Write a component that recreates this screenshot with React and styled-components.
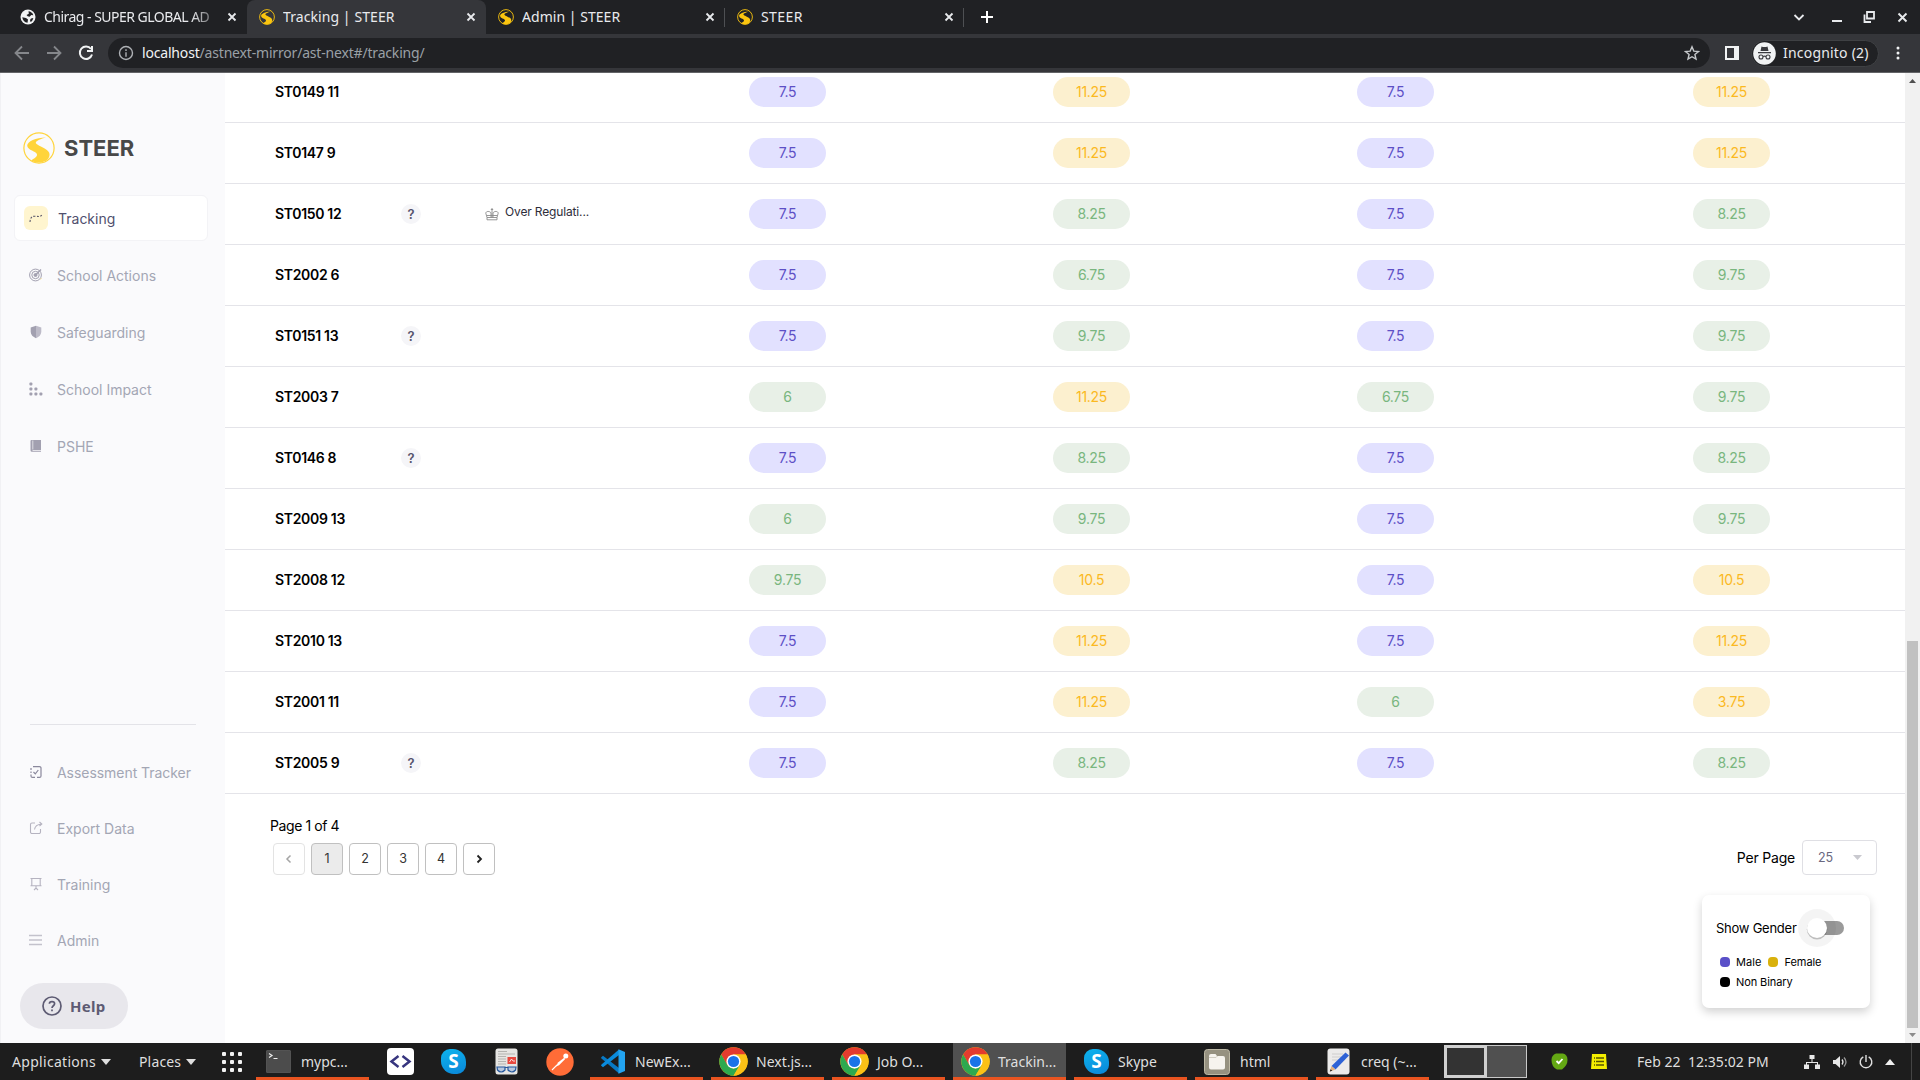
import React from "react";
import styled, { createGlobalStyle, css } from "styled-components";

const GlobalStyle = createGlobalStyle`
  * { box-sizing: border-box; }
  body { margin: 0; background: #fff; overflow: hidden; }
  svg { display: block; flex: none; }
`;

const uiFont = `"Noto Sans", "Open Sans", sans-serif`;
const appFont = `Inter, "Liberation Sans", sans-serif`;

const Screen = styled.div`
  width: 1920px;
  height: 1080px;
  display: flex;
  flex-direction: column;
  overflow: hidden;
  font-family: ${appFont};
`;

/* ---------- Browser chrome ---------- */

const TabStrip = styled.div`
  height: 34px;
  flex: none;
  display: flex;
  align-items: center;
  padding-left: 8px;
  background: #202124;
`;

const Tab = styled.div`
  position: relative;
  width: 239px;
  height: 34px;
  display: flex;
  align-items: center;
  gap: 8px;
  padding: 0 10px 0 12px;
  border-radius: 8px 8px 0 0;
  background: ${(p) => (p.$active ? "#35363a" : "transparent")};
  ${(p) =>
    p.$divider &&
    css`
      &::after {
        content: "";
        position: absolute;
        right: 0;
        top: 8px;
        width: 1px;
        height: 19px;
        background: #4e5053;
      }
    `}
`;

const TabTitle = styled.div`
  flex: 1;
  min-width: 0;
  overflow: hidden;
  white-space: nowrap;
  font: 400 14px/20px ${uiFont};
  letter-spacing: ${(p) => p.$ls || 0}px;
  color: #e9eaed;
  ${(p) =>
    p.$fade &&
    css`
      mask-image: linear-gradient(90deg, #000 84%, transparent 103%);
    `}
`;

const NewTab = styled.div`
  margin-left: 16px;
`;

const WindowControls = styled.div`
  margin-left: auto;
  display: flex;
  align-items: center;
  padding-right: 12px;
`;

const ControlSlot = styled.div`
  width: 12px;
  margin-left: ${(p) => p.$gap || 0}px;
  display: flex;
  justify-content: center;
`;

const Toolbar = styled.div`
  height: 39px;
  flex: none;
  display: flex;
  align-items: center;
  background: #35363a;
  border-bottom: 1px solid #636467;
  padding: 0 13px;
`;

const NavButtons = styled.div`
  display: flex;
  gap: 14px;
  width: 95px;
`;

const AddressBar = styled.div`
  width: 1602px;
  height: 30px;
  display: flex;
  align-items: center;
  padding: 0 10px;
  gap: 8px;
  border-radius: 15px;
  background: #202124;
`;

const Url = styled.div`
  flex: 1;
  font: 400 14px/20px ${uiFont};
  letter-spacing: -0.18px;
  color: #9aa0a6;
  b {
    font-weight: 400;
    color: #f1f3f4;
  }
`;

const PanelIcon = styled.div`
  margin-left: 15px;
`;

const Incognito = styled.div`
  margin-left: 12px;
  width: 128px;
  height: 27px;
  display: flex;
  align-items: center;
  gap: 7px;
  padding-left: 1px;
  border-radius: 14px;
  border: 1px solid #3f4144;
  background: #202124;
  color: #e8eaed;
  white-space: nowrap;
  font: 400 14px/20px ${uiFont};
  letter-spacing: 0.2px;
`;

const MenuDots = styled.div`
  margin-left: 17px;
`;

/* ---------- Page body ---------- */

const Page = styled.div`
  height: 970px;
  flex: none;
  display: flex;
  background: #fff;
`;

const Sidebar = styled.aside`
  width: 225px;
  flex: none;
  display: flex;
  flex-direction: column;
  background: #fafafc;
  border-left: 1px solid #f1f1f4;
`;

const Brand = styled.div`
  display: flex;
  align-items: center;
  gap: 9px;
  padding: 60px 0 0 22px;
  height: 90px;
  color: #484848;
  font-size: 22px;
  font-weight: 700;
  letter-spacing: 0;
`;

const Nav = styled.nav`
  display: flex;
  flex-direction: column;
  padding: 0 17px 0 13px;
  margin-top: ${(p) => p.$top}px;
  gap: ${(p) => p.$gap}px;
`;

const NavItem = styled.div`
  height: 46px;
  display: flex;
  align-items: center;
  padding-left: ${(p) => (p.$active ? 9 : 13)}px;
  border-radius: 6px;
  border: 1px solid ${(p) => (p.$active ? "#f3f3f6" : "transparent")};
  background: ${(p) => (p.$active ? "#fff" : "transparent")};
  color: ${(p) => (p.$active ? "#50506e" : "#a3a6b4")};
  font-size: 14px;
  letter-spacing: ${(p) => p.$ls || 0}px;
  white-space: nowrap;
`;

const NavIcon = styled.div`
  width: ${(p) => (p.$active ? 24 : 15)}px;
  height: ${(p) => (p.$active ? 24 : 15)}px;
  margin-right: ${(p) => (p.$active ? 10 : 14)}px;
  display: flex;
  align-items: center;
  justify-content: center;
  border-radius: 6px;
  background: ${(p) => (p.$active ? "#fff5cf" : "transparent")};
`;

const SideRule = styled.div`
  height: 1px;
  margin: 255px 29px 0 29px;
  background: #e3e3e8;
`;

const HelpButton = styled.div`
  margin: 20px 0 0 19px;
  width: 108px;
  height: 46px;
  display: flex;
  align-items: center;
  gap: 8px;
  padding-left: 22px;
  border-radius: 23px;
  background: #e8e7ec;
  color: #5d5b73;
  font: 700 15px/20px ${uiFont};
  letter-spacing: 0.3px;
`;

const Content = styled.main`
  width: 1680px;
  flex: none;
  overflow: hidden;
`;

const Table = styled.div`
  margin-top: -11px;
`;

const Row = styled.div`
  height: 61px;
  display: grid;
  grid-template-columns: 126px 84px 264px 304px 304px 336px 1fr;
  align-items: center;
  padding-left: 50px;
  border-bottom: 1px solid #e4e4e9;
`;

const StudentId = styled.div`
  padding-bottom: 1px;
  color: #000;
  font-size: 14px;
  font-weight: 600;
  letter-spacing: -0.32px;
`;

const QuestionBadge = styled.div`
  width: 20px;
  height: 20px;
  border-radius: 50%;
  background: #f5f5f8;
  color: #56546d;
  font-size: 13px;
  font-weight: 600;
  line-height: 21px;
  text-align: center;
`;

const Flag = styled.div`
  display: flex;
  align-items: center;
  gap: 6px;
  color: #2d2d3a;
  font-size: 12px;
  letter-spacing: -0.15px;
  span {
    padding-bottom: 5px;
  }
`;

const tones = {
  violet: ["#e2e1ff", "#5d50c6"],
  amber: ["#fcf0cf", "#fbb91f"],
  green: ["#e8f0e7", "#79b67e"],
};

const Score = styled.div`
  width: 77px;
  height: 30px;
  border-radius: 15px;
  background: ${(p) => tones[p.$tone][0]};
  color: ${(p) => tones[p.$tone][1]};
  font-size: 14px;
  line-height: 30px;
  text-align: center;
  letter-spacing: -0.3px;
`;

const Footer = styled.div`
  display: flex;
  justify-content: space-between;
  padding: 22px 28px 0 45px;
`;

const PageCount = styled.div`
  height: 20px;
  line-height: 20px;
  font-size: 14px;
  letter-spacing: -0.42px;
  color: #000;
`;

const PageButtons = styled.div`
  display: flex;
  gap: 6px;
  margin: 7px 0 0 3px;
`;

const PageButton = styled.div`
  width: 32px;
  height: 32px;
  display: flex;
  align-items: center;
  justify-content: center;
  padding-bottom: 1px;
  border-radius: 4px;
  border: 1px solid ${(p) => (p.$disabled ? "#e3e3e3" : "#c0c0c0")};
  background: ${(p) => (p.$selected ? "#ebebeb" : "#fff")};
  color: ${(p) => (p.$disabled ? "#a5a5a5" : "#333")};
  font-size: 12.5px;
`;

const PerPage = styled.div`
  display: flex;
  align-items: center;
  gap: 7px;
  height: 35px;
  margin-top: 24px;
  color: #000;
  font-size: 14px;
  letter-spacing: -0.2px;
`;

const Select = styled.div`
  width: 75px;
  height: 35px;
  display: flex;
  align-items: center;
  justify-content: space-between;
  padding: 0 14px 0 15px;
  border: 1px solid #dfdfe4;
  border-radius: 4px;
  color: #6a6880;
  font-size: 12.5px;
`;

const GenderCard = styled.div`
  width: 168px;
  height: 113px;
  margin: 20px 35px 0 auto;
  padding: 14px 14px 0;
  border-radius: 7px;
  background: #fff;
  box-shadow: 0 4px 10px rgba(0, 0, 0, 0.18);
  color: #000;
`;

const ToggleRow = styled.div`
  display: flex;
  align-items: center;
  height: 38px;
  font-size: 13px;
  letter-spacing: -0.25px;
  white-space: nowrap;
`;

const ToggleLabel = styled.span`
  width: 82px;
  padding-bottom: 1px;
`;

const Legend = styled.div`
  display: flex;
  flex-wrap: wrap;
  padding-left: 4px;
  margin-top: 5px;
`;

const LegendItem = styled.div`
  display: flex;
  align-items: center;
  height: 20px;
  margin-right: 6px;
  font-size: 11px;
  letter-spacing: ${(p) => p.$ls}px;
  &::before {
    content: "";
    width: 10px;
    height: 10px;
    margin-right: ${(p) => p.$gap}px;
    border-radius: 4px;
    background: ${(p) => p.$color};
  }
`;

const Scrollbar = styled.div`
  width: 15px;
  display: flex;
  flex-direction: column;
  align-items: center;
  justify-content: space-between;
  padding: 6px 0;
  background: #f1f1f1;
`;

const Thumb = styled.div`
  width: 11px;
  height: 387px;
  margin: auto 0 5px;
  background: #c1c1c1;
`;

/* ---------- Desktop panel ---------- */

const Panel = styled.div`
  height: 37px;
  flex: none;
  display: flex;
  background: #1d1d1d;
  color: #dfdfdf;
  font: 400 14px/37px ${uiFont};
  white-space: nowrap;
`;

const Menu = styled.div`
  width: ${(p) => p.$w}px;
  display: flex;
  align-items: center;
  gap: 5px;
  padding-left: ${(p) => p.$pad}px;
  letter-spacing: ${(p) => p.$ls}px;
`;

const AppsGrid = styled.div`
  width: 44px;
  padding: 9px 0 0 10px;
`;

const Task = styled.div`
  width: 113px;
  height: 37px;
  display: flex;
  align-items: center;
  gap: ${(p) => p.$gap ?? 10}px;
  margin-right: ${(p) => p.$mr ?? 8}px;
  padding-left: ${(p) => p.$pad ?? 10}px;
  background: ${(p) => (p.$active ? "#505050" : "transparent")};
  box-shadow: inset 0 -3px #e95420;
  letter-spacing: ${(p) => p.$ls ?? 0}px;
`;

const Launcher = styled.div`
  width: ${(p) => p.$w}px;
  display: flex;
  align-items: center;
`;

const Pager = styled.div`
  width: 83px;
  height: 33px;
  margin: 2px 24px 0 7px;
  display: grid;
  grid-template-columns: 42px 1fr;
  border: 1px solid #c9c9c9;
  background: #505050;
`;

const Workspace = styled.div`
  margin: -1px 0 -1px -1px;
  border: 3px solid #d0d0d0;
  background: #333;
`;

const Tray = styled.div`
  display: flex;
  align-items: center;
  flex: 1;
`;

const TrayItem = styled.div`
  width: ${(p) => p.$w}px;
  letter-spacing: ${(p) => p.$ls || 0}px;
`;

const PanelEdge = styled.div`
  width: 1px;
  height: 37px;
  margin-left: auto;
  margin-right: 8px;
  background: #444;
`;

/* ---------- Icons ---------- */

const SteerMark = ({ size, color, thin = 1.2 }) => (
  <svg width={size} height={size} viewBox="0 0 32 32" fill="none">
    <circle cx="16" cy="16" r={15.7 - thin / 2} stroke={color} strokeWidth={thin} />
    <path
      d="M23 5.5C13 5.5 4 9.500 4.200 13.800 4.500 18.500 13.500 19 14 22.500c.3 2.800-3.500 4-5.700 6C12 31.300 20 31.600 24.500 27.500c3.200-3.800 2.500-7.600-1-9.800C19 14.800 12.300 12.500 12.800 10.600c.5-2 5-3.800 10.200-5.100z"
      fill={color}
    />
  </svg>
);

const GlobeIcon = () => (
  <svg width="16" height="16" viewBox="0 0 16 16">
    <circle cx="8" cy="8" r="7.500" fill="#f1f3f4" />
    <path d="M8.500 2.200c2 .2 4.300 1.500 4.800 4l-2-.2-1.800 1.800-1.800-.5L6.500 6l2.300-1.200zM2.300 8.300l3.700.7 2 1.500-.5 3.200C4.600 13.500 2.500 11.300 2.300 8.300zM11 9.500l2.300-.5c-.3 2-1.300 3.300-2.800 4.100l-.5-2z" fill="#202124" />
  </svg>
);

const Stroke = ({ w = 16, h = w, vb, d, color = "#e8eaed", sw = 1.8, ...rest }) => (
  <svg width={w} height={h} viewBox={vb || `0 0 ${w} ${h}`} fill="none" stroke={color} strokeWidth={sw} {...rest}>
    <path d={d} />
  </svg>
);

const CloseIcon = () => <Stroke w={10} d="M1.500 1.500l7 7M8.500 1.500l-7 7" />;

const Caret = ({ w = 10, h = 6, color = "#dfdfdf", up }) => (
  <svg width={w} height={h} viewBox="0 0 10 6" preserveAspectRatio="none">
    <path d={up ? "M0 6L5 0l5 6z" : "M0 0h10L5 6z"} fill={color} />
  </svg>
);

const StarIcon = () => (
  <Stroke w={16} sw={1.400} color="#c5c8cb" d="M8 1.800l1.800 4.300 4.700.4-3.600 3 1.100 4.600L8 11.700l-4 2.400 1.100-4.600-3.600-3 4.700-.4z" />
);

const IncognitoIcon = () => (
  <svg width="23" height="23" viewBox="0 0 23 23">
    <circle cx="11.500" cy="11.500" r="11.300" fill="#f1f3f4" />
    <path d="M8.500 4.500l1.500.5h3l1.500-.5 1 4.500h-8zM5 10h13v1.200h-13z" fill="#3a3b3f" />
    <g fill="none" stroke="#3a3b3f" strokeWidth="1.100">
      <circle cx="8" cy="15" r="2" />
      <circle cx="15" cy="15" r="2" />
      <path d="M10 14.500q1.500-.8 3 0" />
    </g>
  </svg>
);

const navIcons = {
  track: (
    <Stroke w={15} h={12} sw={1.100} color="#5d5a6b" strokeDasharray="2 1.500" d="M1 10C1.300 5.500 3 4.200 6 4.200c3 0 5 1.600 7.500-2" />
  ),
  target: (
    <svg width="14" height="14" viewBox="0 0 14 14" fill="none" stroke="#a2a0b0">
      <circle cx="6.500" cy="7" r="5.900" />
      <circle cx="6.500" cy="7" r="3.700" />
      <circle cx="6.500" cy="7" r="1.500" fill="#a2a0b0" />
      <path d="M7 6.500L12 1.500" strokeWidth="1.500" />
      <path d="M11.500 11.500l1-1.500" stroke="#f3dfa0" />
    </svg>
  ),
  shield: (
    <svg width="14" height="14" viewBox="0 0 14 14">
      <path d="M7 .8L12.300 2.500v4.300c0 3-2.200 5.200-5.300 6.500z" fill="#bdbbc8" />
      <path d="M7 .8L1.700 2.500v4.300c0 3 2.200 5.200 5.300 6.500z" fill="#a2a0b0" />
    </svg>
  ),
  dots: (
    <svg width="14" height="14" viewBox="0 0 14 14" fill="#a2a0b0">
      {[[0, 0], [0, 5], [5, 5], [0, 10], [5, 10], [10, 10]].map(([x, y]) => (
        <rect key={`${x}-${y}`} x={x + 0.4} y={y + 0.4} width="3" height="3" rx="1" />
      ))}
    </svg>
  ),
  book: (
    <svg width="14" height="14" viewBox="0 0 14 14">
      <path d="M2.500 1h9.500v10H3.500v.8H12v1H3a1.500 1.500 0 01-1.500-1.500V2a1 1 0 011-1z" fill="#a2a0b0" />
      <path d="M3.800 1.500v9" stroke="#dddce3" />
    </svg>
  ),
  check: (
    <svg width="14" height="14" viewBox="0 0 14 14" fill="none" stroke="#8a889c" strokeWidth="1.200">
      <path d="M4 1.600h6.500a1.500 1.500 0 011.500 1.500v7.800a1.500 1.500 0 01-1.500 1.500H8M6 12.400H3.500A1.500 1.500 0 012 10.900V9.500M2 8V6.500M2 5V3" />
      <path d="M4.500 7l1.800 1.800L9.300 5" />
    </svg>
  ),
  share: (
    <Stroke w={14} sw={1.100} color="#b5b3c0" d="M6 2H3a1.500 1.500 0 00-1.500 1.500v7.500A1.500 1.500 0 003 12.500h7a1.500 1.500 0 001.500-1.500V8M5.500 8.500C6 5 8 3.500 12.500 3M10.500 1l2.300 2-2.300 2" />
  ),
  board: (
    <Stroke w={14} sw={1.100} color="#b5b3c0" d="M1.500 1.500h11M2.800 1.500v7.200h8.400V1.500M1.500 8.700h11M7 8.700v3M5 13l2-2 2 2" />
  ),
  menu: <Stroke w={14} sw={1.500} color="#c3c2cc" d="M0 2.500h13M0 7h13M0 11.500h13" />,
};

const HelpIcon = () => (
  <svg width="20" height="20" viewBox="0 0 20 20" fill="none" stroke="#5d5b73" strokeWidth="1.700">
    <circle cx="10" cy="10" r="9" />
    <path d="M7.400 7.800C7.400 4.900 12.600 4.900 12.600 7.800c0 1.900-2.600 2-2.600 4.200M10 13.500v1.800" />
  </svg>
);

const CrownIcon = () => (
  <svg width="14" height="14" viewBox="0 0 14 14" fill="none" stroke="#8b8b8b" strokeWidth=".9">
    <path d="M2 10.500L.8 6.200C.8 4 5 3.800 6 6v4.500M12 10.500l1.200-4.300C13.200 4 9 3.800 8 6v4.500M7 1v9.500M5.800 2.500h2.400M2 10.500h10v2.300H2zM2 8.500h10" />
  </svg>
);

const ToggleIcon = () => (
  <svg width="48" height="38" viewBox="0 0 48 38">
    <rect x="14" y="12" width="32" height="14" rx="7" fill="#9a9a9a" />
    <circle cx="19" cy="19" r="19" fill="#000" fillOpacity=".045" />
    <circle cx="19" cy="20.200" r="10.200" fill="#000" fillOpacity=".22" />
    <circle cx="19" cy="19" r="10" fill="#fff" />
  </svg>
);

const ChromeIcon = () => (
  <svg width="29" height="29" viewBox="0 0 48 48">
    <circle cx="24" cy="24" r="23.500" fill="#fbc116" />
    <path d="M3.600 12.300A23.500 23.500 0 0144.400 12.300L24 12.300 13.600 30z" fill="#e33b2e" />
    <path d="M3.600 12.300L14 30.200 24 36l10.400-6L24 47.500A23.500 23.500 0 013.600 12.300z" fill="#2da94f" />
    <path d="M44.400 12.300H24v11.700l10.400 6L24 47.500A23.500 23.500 0 0044.400 12.300z" fill="#fbc116" />
    <circle cx="24" cy="24" r="11.700" fill="#fff" />
    <circle cx="24" cy="24" r="9.300" fill="#1a73e8" />
  </svg>
);

const SkypeGlyph = styled.div`
  width: 25px;
  height: 25px;
  display: flex;
  align-items: center;
  justify-content: center;
  border-radius: 9px 13px 9px 13px;
  background: linear-gradient(160deg, #0db4ee, #0a86d8);
  color: #fff;
  font: 700 19px/25px ${uiFont};
`;

const TerminalIcon = () => (
  <svg width="25" height="23" viewBox="0 0 25 23">
    <rect width="25" height="23" rx="2.500" fill="#4c4c4c" stroke="#666" strokeWidth=".6" />
    <path d="M3 3.500l3 2-3 2M7.500 8.500h4" fill="none" stroke="#eee" strokeWidth="1.200" />
  </svg>
);

const CodeIcon = () => (
  <svg width="27" height="27" viewBox="0 0 27 27">
    <rect width="27" height="27" rx="4" fill="#fff" />
    <path d="M11.500 8L4.500 13.500l7 5.500M15.500 8l7 5.500-7 5.500" fill="none" stroke="#37357f" strokeWidth="2.500" />
  </svg>
);

const ReaderIcon = () => (
  <svg width="23" height="27" viewBox="0 0 23 27">
    <rect x=".5" y=".5" width="22" height="26" rx="2.500" fill="#e6e5e2" />
    <path d="M3 3.500h9M3 6h17M3 8.500h8M3 11h8M3 13.500h8M3 16h8" stroke="#b4b3b0" />
    <rect x="12.500" y="9" width="8.500" height="7" fill="#e8493f" />
    <path d="M14.500 14l2-3 1.500 2h2" stroke="#fff" fill="none" strokeWidth=".8" />
    <path d="M2 19h8v3q-4 4-7.500 0zM13 19h8l-.5 3q-3.500 4-7.500 0zM10 19.500h3" fill="#b9c8de" stroke="#24569b" strokeWidth="1.200" />
  </svg>
);

const PostmanIcon = () => (
  <svg width="28" height="28" viewBox="0 0 28 28">
    <circle cx="14" cy="14" r="13.700" fill="#ff6c37" />
    <circle cx="19.800" cy="8" r="2.500" fill="#fff" />
    <path d="M18.500 9.500L12 14.500l-2.200 4 3.200-1.200 6-6z" fill="#fff" />
    <path d="M11 17L6 22" stroke="#fff" strokeWidth="1.100" />
  </svg>
);

const VsCodeIcon = () => (
  <svg width="25" height="25" viewBox="0 0 25 25">
    <path d="M1 8.500l2-1.700L19 19v5.500L1.500 9.500z" fill="#0879c4" />
    <path d="M1 16.500l2 1.700L19 6V.5L1.500 15.500z" fill="#0a8bdc" />
    <path d="M18.500.3L25 3v19l-6.500 2.700z" fill="#23a4f0" />
  </svg>
);

const FilesIcon = () => (
  <svg width="26" height="26" viewBox="0 0 26 26">
    <rect x=".5" y=".5" width="25" height="25" rx="3" fill="#969180" stroke="#bdb8a4" />
    <path d="M5 7q0-2 2-2h4.500l1.500 2h6q2 0 2 2v9.500q0 2-2 2H7q-2 0-2-2z" fill="#f6f3ee" />
    <path d="M5 8.500h7l1.500-1.500" stroke="#d1cdc2" fill="none" />
  </svg>
);

const EditorIcon = () => (
  <svg width="23" height="27" viewBox="0 0 23 27">
    <rect x=".5" y=".5" width="22" height="26" rx="3" fill="#ecebea" />
    <path d="M5 6h11M5 9h9M5 12h7" stroke="#cfcecd" />
    <path d="M18.500 4.500l3.500 3L8.500 21.500 4.500 18z" fill="#2f63d6" />
    <path d="M4.500 18l4 3.500-5.700 2z" fill="#e3b27c" />
    <path d="M3.600 21.200l1.700 1.600-2.500.7z" fill="#222" />
  </svg>
);

/* ---------- Data ---------- */

const tabs = [
  { title: "Chirag - SUPER GLOBAL AD", icon: <GlobeIcon />, fade: true, ls: -0.52 },
  { title: "Tracking | STEER", active: true, ls: 0.08 },
  { title: "Admin | STEER", divider: true, ls: 0.04 },
  { title: "STEER", divider: true, ls: 0.4 },
];

const mainNav = [
  { label: "Tracking", icon: "track", active: true },
  { label: "School Actions", icon: "target" },
  { label: "Safeguarding", icon: "shield" },
  { label: "School Impact", icon: "dots" },
  { label: "PSHE", icon: "book" },
];

const toolsNav = [
  { label: "Assessment Tracker", icon: "check", ls: -0.05 },
  { label: "Export Data", icon: "share" },
  { label: "Training", icon: "board" },
  { label: "Admin", icon: "menu" },
];

const V = "violet";
const A = "amber";
const G = "green";

const rows = [
  { id: "ST0149 11", scores: [["7.5", V], ["11.25", A], ["7.5", V], ["11.25", A]] },
  { id: "ST0147 9", scores: [["7.5", V], ["11.25", A], ["7.5", V], ["11.25", A]] },
  { id: "ST0150 12", help: true, flag: "Over Regulati...", scores: [["7.5", V], ["8.25", G], ["7.5", V], ["8.25", G]] },
  { id: "ST2002 6", scores: [["7.5", V], ["6.75", G], ["7.5", V], ["9.75", G]] },
  { id: "ST0151 13", help: true, scores: [["7.5", V], ["9.75", G], ["7.5", V], ["9.75", G]] },
  { id: "ST2003 7", scores: [["6", G], ["11.25", A], ["6.75", G], ["9.75", G]] },
  { id: "ST0146 8", help: true, scores: [["7.5", V], ["8.25", G], ["7.5", V], ["8.25", G]] },
  { id: "ST2009 13", scores: [["6", G], ["9.75", G], ["7.5", V], ["9.75", G]] },
  { id: "ST2008 12", scores: [["9.75", G], ["10.5", A], ["7.5", V], ["10.5", A]] },
  { id: "ST2010 13", scores: [["7.5", V], ["11.25", A], ["7.5", V], ["11.25", A]] },
  { id: "ST2001 11", scores: [["7.5", V], ["11.25", A], ["6", G], ["3.75", A]] },
  { id: "ST2005 9", help: true, scores: [["7.5", V], ["8.25", G], ["7.5", V], ["8.25", G]] },
];

const NavList = ({ items, top, gap }) => (
  <Nav $top={top} $gap={gap}>
    {items.map((n) => (
      <NavItem key={n.label} $active={n.active} $ls={n.ls}>
        <NavIcon $active={n.active}>{navIcons[n.icon]}</NavIcon>
        {n.label}
      </NavItem>
    ))}
  </Nav>
);

export default function App() {
  return (
    <Screen>
      <GlobalStyle />
      <TabStrip>
        {tabs.map((t) => (
          <Tab key={t.title} $active={t.active} $divider={t.divider}>
            {t.icon || <SteerMark size={16} color="#fbc50f" thin={1.800} />}
            <TabTitle $fade={t.fade} $ls={t.ls}>{t.title}</TabTitle>
            <CloseIcon />
          </Tab>
        ))}
        <NewTab>
          <Stroke w={14} sw={2} color="#fff" d="M7 1v12M1 7h12" />
        </NewTab>
        <WindowControls>
          <ControlSlot><Stroke w={12} d="M1.500 4L6 8.500 10.500 4" /></ControlSlot>
          <ControlSlot $gap={26}><Stroke w={12} sw={2} d="M1 10h10" /></ControlSlot>
          <ControlSlot $gap={20}><Stroke w={12} sw={1.800} d="M4 1h7v6.500H4zM1.500 3.500v7.500H8" /></ControlSlot>
          <ControlSlot $gap={21}><Stroke w={11} sw={1.900} d="M1.500 1.500l8 8M9.500 1.500l-8 8" /></ControlSlot>
        </WindowControls>
      </TabStrip>

      <Toolbar>
        <NavButtons>
          <Stroke w={18} color="#85878b" d="M16 9H3M9 2.500L2.500 9 9 15.500" />
          <Stroke w={18} color="#85878b" d="M2 9h13M9 2.500l6.500 6.500L9 15.500" />
          <Stroke w={18} sw={2} color="#f1f3f4" d="M14 5A6.200 6.200 0 1015 10.500M15 2v5h-5" />
        </NavButtons>
        <AddressBar>
          <svg width="16" height="16" viewBox="0 0 16 16" fill="none" stroke="#aeb1b5" strokeWidth="1.400">
            <circle cx="8" cy="8" r="6.500" />
            <path d="M8 4.300v1.700M8 7.200v4.500" />
          </svg>
          <Url><b>localhost</b>/astnext-mirror/ast-next#/tracking/</Url>
          <StarIcon />
        </AddressBar>
        <PanelIcon>
          <svg width="14" height="14" viewBox="0 0 14 14">
            <path d="M0 0h14v14H0zM2 2v10h7V2z" fillRule="evenodd" fill="#f1f3f4" />
          </svg>
        </PanelIcon>
        <Incognito>
          <IncognitoIcon />
          Incognito (2)
        </Incognito>
        <MenuDots>
          <svg width="4" height="14" viewBox="0 0 4 14" fill="#f1f3f4">
            <circle cx="2" cy="2" r="1.500" />
            <circle cx="2" cy="7" r="1.500" />
            <circle cx="2" cy="12" r="1.500" />
          </svg>
        </MenuDots>
      </Toolbar>

      <Page>
        <Sidebar>
          <Brand>
            <SteerMark size={32} color="#ffd43b" />
            STEER
          </Brand>
          <NavList items={mainNav} top={32} gap={11} />
          <SideRule />
          <NavList items={toolsNav} top={24} gap={10} />
          <HelpButton>
            <HelpIcon />
            Help
          </HelpButton>
        </Sidebar>

        <Content>
          <Table>
            {rows.map((r) => (
              <Row key={r.id}>
                <StudentId>{r.id}</StudentId>
                <div>{r.help && <QuestionBadge>?</QuestionBadge>}</div>
                <div>
                  {r.flag && (
                    <Flag>
                      <CrownIcon />
                      <span>{r.flag}</span>
                    </Flag>
                  )}
                </div>
                {r.scores.map(([value, tone], i) => (
                  <Score key={i} $tone={tone}>{value}</Score>
                ))}
              </Row>
            ))}
          </Table>

          <Footer>
            <div>
              <PageCount>Page 1 of 4</PageCount>
              <PageButtons>
                <PageButton $disabled>
                  <Stroke w={10} sw={1.500} color="#a5a5a5" d="M6.500 1.500L3 5l3.500 3.500" />
                </PageButton>
                <PageButton $selected>1</PageButton>
                <PageButton>2</PageButton>
                <PageButton>3</PageButton>
                <PageButton>4</PageButton>
                <PageButton>
                  <Stroke w={10} sw={1.800} color="#212121" d="M3.500 1.500L7 5 3.500 8.500" />
                </PageButton>
              </PageButtons>
            </div>
            <PerPage>
              Per Page
              <Select>
                25
                <Caret w={9} h={5} color="#c9c9cf" />
              </Select>
            </PerPage>
          </Footer>

          <GenderCard>
            <ToggleRow>
              <ToggleLabel>Show Gender</ToggleLabel>
              <ToggleIcon />
            </ToggleRow>
            <Legend>
              <LegendItem $color="#5a50c8" $gap={6} $ls={0.1}>Male</LegendItem>
              <LegendItem $color="#d9b10c" $gap={7} $ls={-0.1}>Female</LegendItem>
              <LegendItem $color="#000" $gap={6} $ls={-0.1}>Non Binary</LegendItem>
            </Legend>
          </GenderCard>
        </Content>

        <Scrollbar>
          <Caret w={7} h={4} color="#505050" up />
          <Thumb />
          <Caret w={7} h={4} color="#8b8b8b" />
        </Scrollbar>
      </Page>

      <Panel>
        <Menu $w={127} $pad={12} $ls={0.3}>Applications <Caret w={10} h={6} /></Menu>
        <Menu $w={85} $pad={12} $ls={0.15}>Places <Caret w={10} h={6} /></Menu>
        <AppsGrid>
          <svg width="20" height="20" viewBox="0 0 20 20" fill="#f2f2f2">
            {[0, 8, 16].map((y) => [0, 8, 16].map((x) => (
              <rect key={`${x}-${y}`} x={x} y={y} width="4" height="4" rx="1" />
            )))}
          </svg>
        </AppsGrid>
        <div />
        <Task $mr={18}><TerminalIcon />mypc...</Task>
        <Launcher $w={54}><CodeIcon /></Launcher>
        <Launcher $w={54}><SkypeGlyph>S</SkypeGlyph></Launcher>
        <Launcher $w={51}><ReaderIcon /></Launcher>
        <Launcher $w={44}><PostmanIcon /></Launcher>
        <Task><VsCodeIcon />NewEx...</Task>
        <Task $pad={8} $gap={8}><ChromeIcon />Next.js...</Task>
        <Task $pad={8} $gap={8}><ChromeIcon />Job O...</Task>
        <Task $pad={8} $gap={8} $active><ChromeIcon />Trackin...</Task>
        <Task $gap={9}><SkypeGlyph>S</SkypeGlyph>Skype</Task>
        <Task $pad={9}><FilesIcon />html</Task>
        <Task $pad={11} $gap={11}><EditorIcon />creq (~...</Task>
        <Pager><Workspace /></Pager>
        <Tray>
          <TrayItem $w={40}>
            <svg width="17" height="17" viewBox="0 0 17 17">
              <path d="M5 .5h7q4.500 1 4.500 6.500T11 16.500H6Q.5 14 .5 7 .5 2 5 .5z" fill="#64a814" />
              <path d="M5.500 8l2.200 2.200L11.500 6" fill="none" stroke="#fff" strokeWidth="1.800" />
            </svg>
          </TrayItem>
          <TrayItem $w={46}>
            <svg width="16" height="15" viewBox="0 0 16 15">
              <path d="M1 0h14l1 15H0z" fill="#f4ee00" />
              <path d="M3 4h1M5 4h8M3 7.500h1M5 7.500h8M3 11h1M5 11h8" stroke="#555400" strokeWidth="1.300" />
            </svg>
          </TrayItem>
          <TrayItem $w={167} $ls={0.03}>Feb 22&nbsp; 12:35:02 PM</TrayItem>
          <TrayItem $w={29}>
            <svg width="16" height="14" viewBox="0 0 16 14" fill="#e8e8e8">
              <path d="M5.500 0h5v4h-5zM0 9.500h5V14H0zM11 9.500h5V14h-5zM7.500 4h1v3h5.500v3h-1V8H3v2H2V7h5.500z" />
            </svg>
          </TrayItem>
          <TrayItem $w={26}>
            <svg width="15" height="14" viewBox="0 0 15 14" fill="none" stroke="#e8e8e8">
              <path d="M0 5h2.500L7 1v12L2.500 9H0z" fill="#e8e8e8" stroke="none" />
              <path d="M9 4.500q2 2.500 0 5" strokeWidth="1.300" />
              <path d="M11 2.500q4 4.500 0 9" stroke="#999" strokeWidth="1.300" />
            </svg>
          </TrayItem>
          <TrayItem $w={26}>
            <Stroke w={14} sw={1.400} color="#e0e0e0" d="M7 0v7M4.300 1.800a5.800 5.800 0 105.400 0" />
          </TrayItem>
          <TrayItem $w={10}><Caret w={10} h={6} color="#f0f0f0" up /></TrayItem>
          <PanelEdge />
        </Tray>
      </Panel>
    </Screen>
  );
}
